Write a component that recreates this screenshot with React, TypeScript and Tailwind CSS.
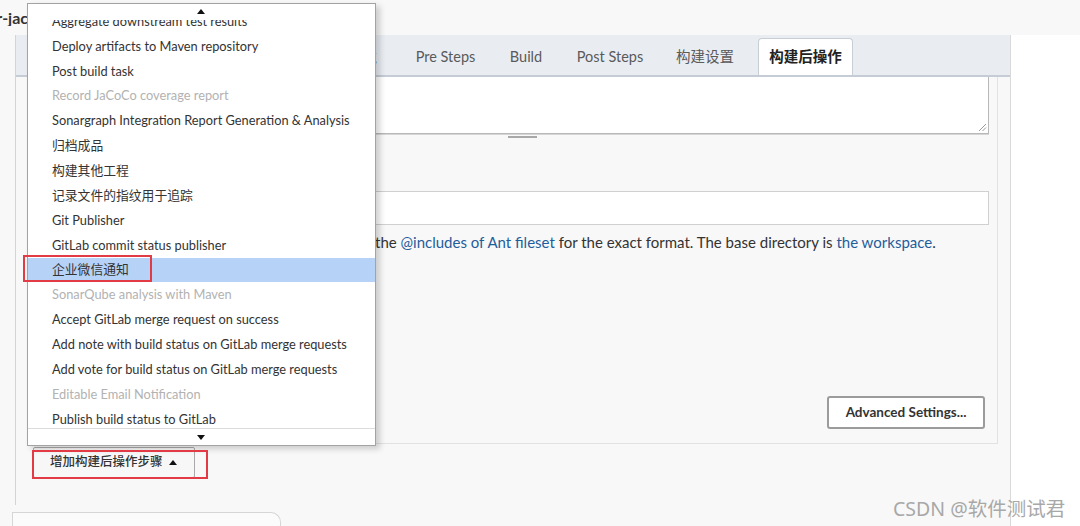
import React from "react";

const items: [string, boolean][] = [
  ["Aggregate downstream test results", false],
  ["Deploy artifacts to Maven repository", false],
  ["Post build task", false],
  ["Record JaCoCo coverage report", true],
  ["Sonargraph Integration Report Generation & Analysis", false],
  ["归档成品", false],
  ["构建其他工程", false],
  ["记录文件的指纹用于追踪", false],
  ["Git Publisher", false],
  ["GitLab commit status publisher", false],
  ["企业微信通知", false],
  ["SonarQube analysis with Maven", true],
  ["Accept GitLab merge request on success", false],
  ["Add note with build status on GitLab merge requests", false],
  ["Add vote for build status on GitLab merge requests", false],
  ["Editable Email Notification", true],
  ["Publish build status to GitLab", false],
];

const FONT = { fontFamily: "Lato, 'Noto Sans CJK SC', sans-serif" };

function TriUp({ className = "" }: { className?: string }) {
  return (
    <svg width="8" height="5" viewBox="0 0 8 5" className={className}>
      <path d="M0 5 L4 0 L8 5 Z" fill="#111" />
    </svg>
  );
}
function TriDown({ className = "" }: { className?: string }) {
  return (
    <svg width="8" height="5" viewBox="0 0 8 5" className={className}>
      <path d="M0 0 L8 0 L4 5 Z" fill="#111" />
    </svg>
  );
}

export default function App() {
  return (
    <div
      className="relative w-[1080px] h-[526px] overflow-hidden bg-[#f8f8f8] text-[#333]"
      style={FONT}
    >
      {/* header */}
      <div className="h-[35px] flex items-center">
        <div className="w-[28px] overflow-hidden flex justify-end">
          <span className="whitespace-nowrap text-[16px] font-bold text-[#333] leading-none">docker-jac</span>
        </div>
      </div>

      <div className="flex h-[491px]">
        <div className="w-[1011px] border-r border-[#d9d9d9] flex flex-col">
          {/* panel */}
          <div className="ml-[15px] h-[470px] border-l border-[#d4d4d4] flex flex-col">
            {/* tab bar */}
            <div className="h-[42px] bg-[#e9edf2] border-b-2 border-[#c5ccd6] flex items-stretch text-[14.5px] text-[#5a5a5a]">
              <div className="w-[390px] mt-[3px] overflow-hidden flex justify-end items-center gap-[34px] pr-[29px] whitespace-nowrap">
                <span>General</span>
                <span>源码管理</span>
                <span>构建触发器</span>
                <span>构建环境</span>
              </div>
              <div className="w-[79px] mt-[3px] flex items-center justify-center">Pre Steps</div>
              <div className="w-[82px] mt-[3px] flex items-center justify-center">Build</div>
              <div className="w-[86px] mt-[3px] flex items-center justify-center">Post Steps</div>
              <div className="w-[104px] mt-[3px] flex items-center justify-center">构建设置</div>
              <div className="ml-[1px] mt-[3px] w-[95px] bg-white border border-b-0 border-[#c8ced6] rounded-t-[4px] flex items-center justify-center font-bold text-[#222]">
                构建后操作
              </div>
            </div>

            {/* inner content */}
            <div className="flex-1 flex flex-col">
              <div className="ml-[12px] mr-[12px] h-[367px] border-r border-b border-[#e2e2e2] flex flex-col pr-[8px]">
                {/* textarea */}
                <div className="ml-[27px] h-[57px] bg-white border border-t-0 border-[#b8b8b8] relative">
                  <svg width="9" height="9" viewBox="0 0 9 9" className="absolute right-[1px] bottom-[1px]">
                    <path d="M8 1 L1 8 M8 4.5 L4.5 8" stroke="#9a9a9a" strokeWidth="1" />
                  </svg>
                </div>
                <div className="ml-[27px] h-[4px] border-t border-[#d6d6d6] flex justify-center">
                  <div className="w-[29px] h-[2px] bg-[#a8a8a8] mt-[1px]" />
                </div>
                <div className="ml-[12px] h-[53px] flex items-end pb-[8px] text-[14px]">用于存档的文件</div>
                {/* input */}
                <div className="ml-[27px] h-[34px] bg-white border border-[#d0d0d0]" />
                {/* help */}
                <div className="ml-[27px] mt-[7px] h-[20px] flex items-center text-[15px] whitespace-nowrap">
                  <div className="w-[320px] overflow-hidden flex justify-end">
                    <span className="whitespace-nowrap">Can use wildcards like 'module/dist/**/*.zip'. See&nbsp;</span>
                  </div>
                  <span>the&nbsp;</span>
                  <span className="text-[#1f5d9c]">@includes of Ant fileset</span>
                  <span>&nbsp;for the exact format. The base directory is&nbsp;</span>
                  <span className="text-[#1f5d9c]">the workspace</span>
                  <span>.</span>
                </div>
                <div className="flex-1 flex items-end justify-end pb-[14px] pr-[4px]">
                  <button className="w-[158px] h-[33px] bg-white border-2 border-[#9b9b9b] rounded-[3px] text-[13.5px] font-bold text-[#333]">
                    Advanced Settings...
                  </button>
                </div>
              </div>
              {/* add button */}
              <div className="mt-[3px] ml-[17px]">
                <button className="w-[162px] h-[31px] bg-[#f7f7f7] border border-[#a9a9a9] rounded-[2px] flex items-center pl-[16px] gap-[6px] text-[12.5px] font-medium text-[#333]">
                  <span>增加构建后操作步骤</span>
                  <TriUp />
                </button>
              </div>
            </div>
          </div>
          {/* bottom bar */}
          <div className="mt-[7px] ml-[12px] w-[269px] flex-1 bg-[#fbfbfb] border border-[#d6d6d6] border-b-0 rounded-tr-[10px]" />
        </div>
        <div className="flex-1 bg-white" />
      </div>

      {/* dropdown menu */}
      <div className="absolute left-[27px] top-[3px] w-[349px] h-[443px] bg-white border border-[#a3a3a3] shadow-[4px_3px_6px_rgba(0,0,0,0.18)] overflow-hidden">
        <div className="pt-[5px] text-[12.8px]">
          {items.map(([label, disabled], i) => (
            <div
              key={i}
              className={
                "h-[24.87px] flex items-center pl-[24px] whitespace-nowrap " +
                (i === 10 ? "bg-[#b7d2f7] " : "") +
                (disabled ? "text-[#b2b2b2]" : "text-[#333]")
              }
            >
              {label}
            </div>
          ))}
        </div>
        <div className="absolute top-0 left-0 right-0 h-[16px] bg-white flex justify-center items-center">
          <TriUp className="ml-[-1px] mt-[-1px]" />
        </div>
        <div className="absolute bottom-0 left-0 right-0 h-[17px] bg-white border-t border-[#dcdcdc] flex justify-center items-center">
          <TriDown className="ml-[-1px]" />
        </div>
      </div>

      {/* annotation boxes */}
      <div className="absolute left-[23px] top-[255px] w-[129px] h-[27px] border-2 border-[#e23b45]" />
      <div className="absolute left-[32px] top-[450px] w-[176px] h-[29px] border-2 border-[#e23b45]" />

      {/* watermark */}
      <div
        className="absolute left-[893px] top-[494px] text-[19.5px] text-[#a8a8a8] whitespace-nowrap"
        style={{ fontFamily: "'Noto Sans', 'Noto Sans CJK SC', sans-serif" }}
      >
        CSDN @软件测试君
      </div>
    </div>
  );
}
